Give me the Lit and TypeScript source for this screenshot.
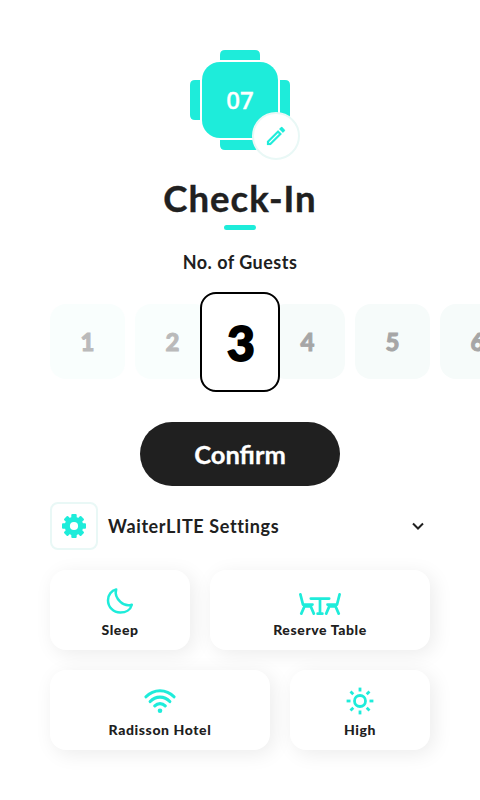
import { LitElement, html, css, svg } from "lit";
import { customElement } from "lit/decorators.js";

const pencil = html`<svg width="24" height="24" viewBox="0 0 24 24" fill="currentColor" stroke="currentColor" stroke-width=".2">
  <path d="M14.06 9.02l.92.92L5.92 19H5v-.92l9.06-9.06M17.66 3c-.25 0-.51.1-.7.29l-1.83 1.83 3.75 3.75 1.83-1.83c.39-.39.39-1.02 0-1.41l-2.34-2.34c-.2-.2-.45-.29-.71-.29zm-3.6 3.19L3 17.25V21h3.75L17.81 9.94l-3.75-3.75z"/>
</svg>`;

const gear = html`<svg width="24" height="24" viewBox="-12 -12 24 24" fill="currentColor">
  ${[0, 45, 90, 135].map((a) => svg`<rect x="-2.7" y="-12" width="5.4" height="24" rx="1" transform="rotate(${a})"/>`)}
  <circle r="9.3"/><circle r="4.1" fill="#fff"/>
</svg>`;

const moon = html`<svg width="32" height="32" viewBox="0 0 32 32" fill="none" stroke="currentColor" stroke-width="2.5" stroke-linejoin="round">
  <path d="M12.2 4.4C7.4 5.6 4 10 4 15.2C4 22 9.4 27.6 16.2 27.6C22 27.6 26.6 24.6 27.8 19.7C24 21 19.6 19.9 16.4 16.9C12.7 13.4 10.9 8.8 12.2 4.4Z"/>
</svg>`;

const diningTable = html`<svg width="42" height="32" viewBox="0 0 42 32" fill="none" stroke="currentColor" stroke-width="2.7" stroke-linecap="round" stroke-linejoin="round">
  <path d="M11.8 13.6H30.2M21 13.6V28.6M18.6 28.7H23.4"/>
  <path d="M1.4 9.3L4 19.6H13.5M5.9 20.4L2.3 28.6M11.3 20.4L14.8 28.6M5.5 21.3H12"/>
  <path d="M40.6 9.3L38 19.6H28.5M36.1 20.4L39.7 28.6M30.7 20.4L27.2 28.6M36.5 21.3H30"/>
</svg>`;

const wifi = html`<svg width="32" height="32" viewBox="0 0 32 32" fill="none" stroke="currentColor" stroke-width="3.1" stroke-linecap="round">
  <path d="M2 11.8C9.7 3.7 22.3 3.7 30 11.8M6.2 16.5C11.6 10.7 20.4 10.7 25.8 16.5M10.8 20.9C13.7 17.9 18.3 17.9 21.2 20.9"/>
  <circle cx="16" cy="25.8" r="2.3" fill="currentColor" stroke="none"/>
</svg>`;

const sun = html`<svg width="32" height="32" viewBox="-16 -16 32 32" fill="none" stroke="currentColor" stroke-width="2.8">
  <circle r="5.5"/>
  ${[0, 45, 90, 135, 180, 225, 270, 315].map((a) => svg`<path d="M0 -9.5V-13.4" transform="rotate(${a})"/>`)}
</svg>`;

@customElement("app-root")
export class AppRoot extends LitElement {
  static styles = css`
    :host { display: block; width: 480px; height: 800px; overflow: hidden; background: #fff; color: #202020; font-family: Lato, "Noto Sans", sans-serif; font-weight: 700; }
    * { box-sizing: border-box; }
    svg { display: block; flex: none; }
    .page { height: 800px; display: flex; flex-direction: column; align-items: center; padding-top: 50px; }
    .table { position: relative; width: 100px; height: 100px; color: #1eecda; }
    .seat-no { position: absolute; inset: 0; display: grid; place-items: center; color: #fff; font: 500 24px/24px "Noto Sans", sans-serif; -webkit-text-stroke: .4px; }
    .edit { position: absolute; left: 62px; top: 62px; width: 48px; height: 48px; border-radius: 50%; border: 2px solid #e9f8f6; background: #fff; display: grid; place-items: center; }
    h1 { margin: 24px 0 0; font-size: 36.5px; line-height: 48px; font-weight: 700; white-space: nowrap; letter-spacing: 1px; -webkit-text-stroke: .4px; }
    .rule { width: 32px; height: 5px; border-radius: 3px; background: #1eecda; margin-top: 3px; }
    .guests-label { margin-top: 20px; font-size: 18px; line-height: 24px; letter-spacing: .48px; }
    .picker { width: 480px; height: 100px; margin-top: 18px; padding-left: 50px; display: flex; align-items: center; }
    .guest { flex: none; width: 75px; height: 75px; margin: 0 10px 1px 0; border-radius: 16px; background: #f6fbfa; color: #a6a6a6; display: grid; place-items: center; font-size: 24px; font-weight: 900; -webkit-text-stroke: .9px; }
    .guest.past { background: #f9fefd; color: #bababa; }
    .guest.chosen { width: 80px; height: 100px; margin: 0 -10px 0 -20px; border: 2px solid #000; background: #fff; color: #000; font-size: 48px; z-index: 1; -webkit-text-stroke: 1.8px; }
    .guest.chosen span { margin-left: 2px; }
    .confirm { margin-top: 30px; width: 200px; height: 64px; border: 0; padding: 0; border-radius: 32px; background: #202020; color: #fff; font: 700 25.5px/32px Lato, sans-serif; -webkit-text-stroke: .3px; }
    .settings { width: 380px; height: 48px; margin-top: 16px; display: flex; align-items: center; font-size: 18px; line-height: 24px; letter-spacing: .62px; }
    .gear { width: 48px; height: 48px; border: 2px solid #e9f8f6; border-radius: 8px; display: grid; place-items: center; color: #1eecda; margin-right: 10px; }
    .chevron { margin-left: auto; margin-right: 4px; }
    .row { width: 380px; display: flex; gap: 20px; margin-top: 20px; }
    .card { width: 140px; height: 80px; border-radius: 16px; background: #fff; box-shadow: 4px 4px 20px rgba(0, 0, 0, .08); display: flex; flex-direction: column; align-items: center; padding-top: 15px; font-size: 14px; line-height: 18px; font-weight: 900; letter-spacing: .6px; }
    .card.wide { width: 220px; }
    .card svg { color: #1eecda; margin-bottom: 4px; }
  `;

  render() {
    return html`<main class="page">
      <div class="table">
        <svg width="100" height="100" viewBox="0 0 100 100" fill="currentColor">
          <path d="M30 10V5Q30 0 35 0H65Q70 0 70 5V10ZM30 90V95Q30 100 35 100H65Q70 100 70 95V90ZM10 30H5Q0 30 0 35V65Q0 70 5 70H10ZM90 30H95Q100 30 100 35V65Q100 70 95 70H90Z"/>
          <rect x="12" y="12" width="76" height="76" rx="18"/>
        </svg>
        <span class="seat-no">07</span>
        <span class="edit">${pencil}</span>
      </div>
      <h1>Check-In</h1>
      <div class="rule"></div>
      <div class="guests-label">No. of Guests</div>
      <div class="picker">
        ${[1, 2, 3, 4, 5, 6].map((n) => html`<div class="guest ${n < 3 ? "past" : n === 3 ? "chosen" : ""}"><span>${n}</span></div>`)}
      </div>
      <button class="confirm">Confirm</button>
      <div class="settings">
        <span class="gear">${gear}</span>
        <span>WaiterLITE Settings</span>
        <svg class="chevron" width="16" height="16" viewBox="0 0 16 16" fill="none" stroke="#202020" stroke-width="2"><path d="M3 5.5L8 10.5L13 5.5"/></svg>
      </div>
      <div class="row">
        <div class="card">${moon}<span>Sleep</span></div>
        <div class="card wide">${diningTable}<span>Reserve Table</span></div>
      </div>
      <div class="row">
        <div class="card wide">${wifi}<span>Radisson Hotel</span></div>
        <div class="card">${sun}<span>High</span></div>
      </div>
    </main>`;
  }
}
